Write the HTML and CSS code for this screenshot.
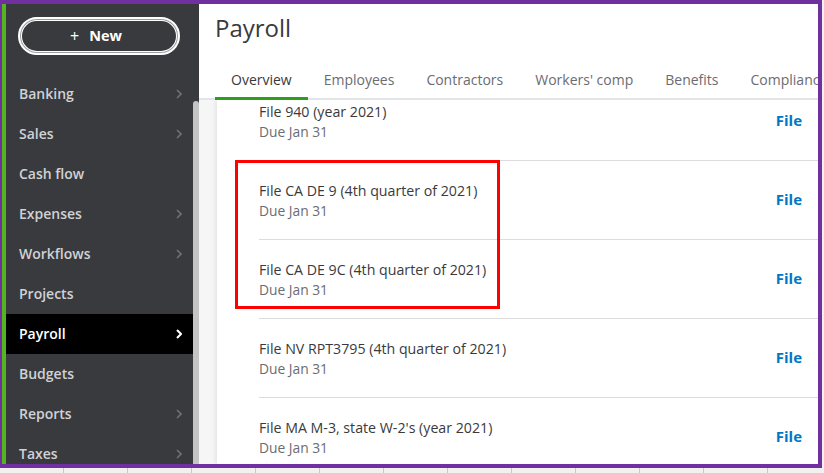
FILE: index.html
```html
<!DOCTYPE html>
<html lang="en">
<head>
<meta charset="utf-8">
<title>Payroll</title>
<link rel="stylesheet" href="styles.css">
</head>
<body>
<div class="frame">
  <aside class="sidebar">
    <nav class="nav">
      <button class="new-btn"><span class="plus">+</span>New</button>
      <ul class="menu">
        <li class="item">Banking<svg class="chev" viewBox="0 0 6 10"><polyline points="1,1 5,5 1,9"/></svg></li>
        <li class="item">Sales<svg class="chev" viewBox="0 0 6 10"><polyline points="1,1 5,5 1,9"/></svg></li>
        <li class="item">Cash flow</li>
        <li class="item">Expenses<svg class="chev" viewBox="0 0 6 10"><polyline points="1,1 5,5 1,9"/></svg></li>
        <li class="item">Workflows<svg class="chev" viewBox="0 0 6 10"><polyline points="1,1 5,5 1,9"/></svg></li>
        <li class="item">Projects</li>
        <li class="item active">Payroll<svg class="chev" viewBox="0 0 6 10"><polyline points="1,1 5,5 1,9"/></svg></li>
        <li class="item">Budgets</li>
        <li class="item">Reports<svg class="chev" viewBox="0 0 6 10"><polyline points="1,1 5,5 1,9"/></svg></li>
        <li class="item">Taxes<svg class="chev" viewBox="0 0 6 10"><polyline points="1,1 5,5 1,9"/></svg></li>
      </ul>
    </nav>
    <div class="scroll-track"><div class="scroll-thumb"></div></div>
  </aside>
  <main class="main">
    <h1 class="title">Payroll</h1>
    <div class="tabs">
      <span class="tab active">Overview</span>
      <span class="tab">Employees</span>
      <span class="tab">Contractors</span>
      <span class="tab">Workers' comp</span>
      <span class="tab">Benefits</span>
      <span class="tab">Compliance</span>
    </div>
    <div class="list-wrap">
      <div class="card">
        <ul class="list">
          <li class="row"><div class="info"><div class="name">File 940 (year 2021)</div><div class="due">Due Jan 31</div></div><a class="file">File</a></li>
          <li class="row"><div class="info"><div class="name">File CA DE 9 (4th quarter of 2021)</div><div class="due">Due Jan 31</div></div><a class="file">File</a></li>
          <li class="row"><div class="info"><div class="name">File CA DE 9C (4th quarter of 2021)</div><div class="due">Due Jan 31</div></div><a class="file">File</a></li>
          <li class="row"><div class="info"><div class="name">File NV RPT3795 (4th quarter of 2021)</div><div class="due">Due Jan 31</div></div><a class="file">File</a></li>
          <li class="row"><div class="info"><div class="name">File MA M-3, state W-2's (year 2021)</div><div class="due">Due Jan 31</div></div><a class="file">File</a></li>
        </ul>
      </div>
    </div>
  </main>
</div>
<div class="highlight"></div>
</body>
</html>
```

FILE: styles.css
```css
* { box-sizing: border-box; }
html, body { margin: 0; padding: 0; }
body {
  width: 824px;
  height: 473px;
  overflow: hidden;
  position: relative;
  font-family: "Open Sans", "DejaVu Sans", sans-serif;
  background-color: #f1f1f1;
  background-image: repeating-linear-gradient(to right, transparent 0 63px, #c9c9c9 63px 64px);
}
.frame {
  width: 822px;
  height: 468px;
  border-style: solid;
  border-color: #7030a0;
  border-width: 4px 4px 4px 2px;
  display: flex;
  overflow: hidden;
  background: #fff;
}
.sidebar {
  width: 197px;
  flex: none;
  display: flex;
  background: #393a3d;
  border-left: 4px solid #53b520;
}
.nav {
  width: 187px;
  padding-top: 13px;
}
.new-btn {
  display: flex;
  align-items: center;
  justify-content: center;
  margin-left: 12px;
  width: 162px;
  height: 38px;
  border-radius: 19px;
  border: 2px solid #fff;
  box-shadow: inset 0 0 0 1px #9a9ca0, inset 0 0 0 2px #fff;
  background: #393a3d;
  color: #fff;
  font-family: inherit;
  font-size: 14.5px;
  font-weight: 700;
  padding: 0 6px 1px 0;
}
.plus { font-weight: 400; margin-right: 10px; font-size: 16px; }
.menu {
  list-style: none;
  margin: 19px 0 0;
  padding: 0;
}
.item {
  height: 40px;
  display: flex;
  align-items: center;
  justify-content: space-between;
  padding: 0 11px 1px 13px;
  font-size: 14px;
  font-weight: 600;
  color: #d0d2d6;
}
.chev {
  width: 6px;
  height: 10px;
  fill: none;
  stroke: #6e7075;
  stroke-width: 1.6;
}
.item.active { background: #000; color: #fff; }
.item.active .chev { stroke: #fff; stroke-width: 2; }
.scroll-track {
  width: 6px;
  background: #393a3d;
}
.scroll-thumb {
  margin-top: 97px;
  height: 400px;
  background: #c4c4c4;
  border-radius: 3px 3px 0 0;
}
.main {
  flex: 1;
  display: flex;
  flex-direction: column;
  min-width: 0;
}
.title {
  margin: 8px 0 0 16px;
  font-size: 24px;
  line-height: 32px;
  font-weight: 400;
  color: #393a3d;
}
.tabs {
  margin-top: 16px;
  display: flex;
  white-space: nowrap;
  border-bottom: 2px solid #e3e4e8;
  padding-left: 16px;
}
.tab {
  padding: 10px 16px 7px;
  line-height: 20px;
  font-size: 14px;
  color: #6b6c72;
  border-bottom: 3px solid transparent;
  margin-bottom: -2px;
}
.tab.active {
  color: #393a3d;
  border-bottom-color: #2ca01c;
}
.list-wrap {
  flex: 1;
  display: flex;
  overflow: hidden;
  background: #f6f6f7;
  padding-left: 18px;
}
.card {
  flex: 1;
  background: #fff;
  box-shadow: -2px 0 4px rgba(0, 0, 0, 0.07);
}
.list {
  list-style: none;
  margin: -18px 0 0 42px;
  padding: 0;
}
.row {
  height: 79px;
  display: flex;
  align-items: center;
  justify-content: space-between;
  padding: 0 16px 0 0;
  border-bottom: 1px solid #dcdcdc;
}
.name {
  font-size: 14.2px;
  line-height: 21px;
  color: #393a3d;
}
.due {
  font-size: 13.8px;
  line-height: 20px;
  color: #6b6c72;
}
.file {
  font-size: 15px;
  font-weight: 700;
  color: #0077c5;
  margin-bottom: 2px;
}
.highlight {
  position: absolute;
  left: 235px;
  top: 160px;
  width: 265px;
  height: 149px;
  border: 3px solid #ff0000;
}
```
